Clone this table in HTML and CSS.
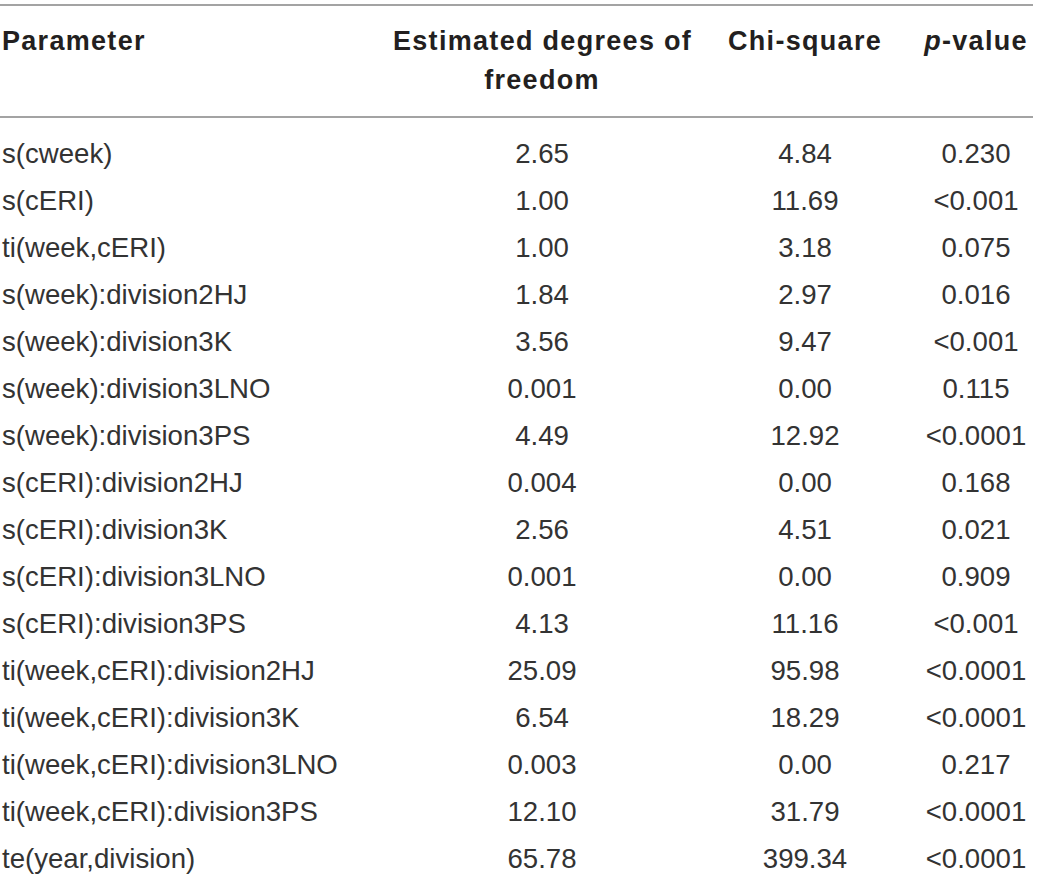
FILE: index.html
```html
<!DOCTYPE html>
<html lang="en">
<head>
<meta charset="utf-8">
<title>GAM smooth terms</title>
<link rel="stylesheet" href="styles.css">
</head>
<body>
<table class="stats">
  <colgroup>
    <col class="c-param">
    <col class="c-edf">
    <col class="c-chi">
    <col class="c-p">
  </colgroup>
  <thead>
    <tr>
      <th class="left">Parameter</th>
      <th>Estimated degrees of<br>freedom</th>
      <th>Chi-square</th>
      <th><i>p</i>-value</th>
    </tr>
  </thead>
  <tbody>
    <tr class="first"><td class="left">s(cweek)</td><td>2.65</td><td>4.84</td><td>0.230</td></tr>
    <tr><td class="left">s(cERI)</td><td>1.00</td><td>11.69</td><td>&lt;0.001</td></tr>
    <tr><td class="left">ti(week,cERI)</td><td>1.00</td><td>3.18</td><td>0.075</td></tr>
    <tr><td class="left">s(week):division2HJ</td><td>1.84</td><td>2.97</td><td>0.016</td></tr>
    <tr><td class="left">s(week):division3K</td><td>3.56</td><td>9.47</td><td>&lt;0.001</td></tr>
    <tr><td class="left">s(week):division3LNO</td><td>0.001</td><td>0.00</td><td>0.115</td></tr>
    <tr><td class="left">s(week):division3PS</td><td>4.49</td><td>12.92</td><td>&lt;0.0001</td></tr>
    <tr><td class="left">s(cERI):division2HJ</td><td>0.004</td><td>0.00</td><td>0.168</td></tr>
    <tr><td class="left">s(cERI):division3K</td><td>2.56</td><td>4.51</td><td>0.021</td></tr>
    <tr><td class="left">s(cERI):division3LNO</td><td>0.001</td><td>0.00</td><td>0.909</td></tr>
    <tr><td class="left">s(cERI):division3PS</td><td>4.13</td><td>11.16</td><td>&lt;0.001</td></tr>
    <tr><td class="left">ti(week,cERI):division2HJ</td><td>25.09</td><td>95.98</td><td>&lt;0.0001</td></tr>
    <tr><td class="left">ti(week,cERI):division3K</td><td>6.54</td><td>18.29</td><td>&lt;0.0001</td></tr>
    <tr><td class="left">ti(week,cERI):division3LNO</td><td>0.003</td><td>0.00</td><td>0.217</td></tr>
    <tr><td class="left">ti(week,cERI):division3PS</td><td>12.10</td><td>31.79</td><td>&lt;0.0001</td></tr>
    <tr><td class="left">te(year,division)</td><td>65.78</td><td>399.34</td><td>&lt;0.0001</td></tr>
  </tbody>
</table>
</body>
</html>
```

FILE: styles.css
```css
html, body {
  margin: 0;
  padding: 0;
  background: #ffffff;
}

body {
  font-family: "Liberation Sans", Arial, sans-serif;
  color: #2a2a2a;
}

.stats {
  margin-top: 4px;
  width: 1033px;
  border-collapse: collapse;
  table-layout: fixed;
  border-top: 2px solid #a3a3a3;
}

.c-param { width: 393px; }
.c-edf { width: 298px; }
.c-chi { width: 228px; }
.c-p { width: 114px; }

.stats th {
  font-size: 27px;
  font-weight: bold;
  letter-spacing: 1.3px;
  line-height: 39px;
  padding: 16px 0;
  text-align: center;
  vertical-align: top;
  white-space: nowrap;
  color: #231f20;
  border-bottom: 2px solid #a3a3a3;
}

.stats td {
  font-size: 27.6px;
  font-weight: normal;
  line-height: 47px;
  padding: 0;
  text-align: center;
  white-space: nowrap;
  color: #333333;
}

.stats .left {
  text-align: left;
  padding-left: 2px;
}

.stats tr.first td {
  padding-top: 12px;
}
```
